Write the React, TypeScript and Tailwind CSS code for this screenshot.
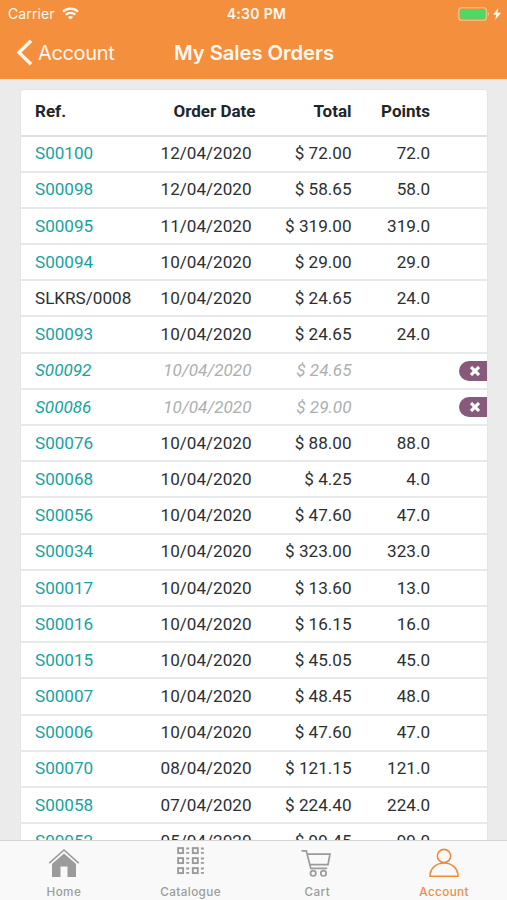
import React from 'react';

interface Order {
  ref: string;
  date: string;
  total: string;
  points?: string;
  plain?: boolean;
  cancelled?: boolean;
}

const orders: Order[] = [
  { ref: 'S00100', date: '12/04/2020', total: '72.00', points: '72.0' },
  { ref: 'S00098', date: '12/04/2020', total: '58.65', points: '58.0' },
  { ref: 'S00095', date: '11/04/2020', total: '319.00', points: '319.0' },
  { ref: 'S00094', date: '10/04/2020', total: '29.00', points: '29.0' },
  { ref: 'SLKRS/0008', date: '10/04/2020', total: '24.65', points: '24.0', plain: true },
  { ref: 'S00093', date: '10/04/2020', total: '24.65', points: '24.0' },
  { ref: 'S00092', date: '10/04/2020', total: '24.65', cancelled: true },
  { ref: 'S00086', date: '10/04/2020', total: '29.00', cancelled: true },
  { ref: 'S00076', date: '10/04/2020', total: '88.00', points: '88.0' },
  { ref: 'S00068', date: '10/04/2020', total: '4.25', points: '4.0' },
  { ref: 'S00056', date: '10/04/2020', total: '47.60', points: '47.0' },
  { ref: 'S00034', date: '10/04/2020', total: '323.00', points: '323.0' },
  { ref: 'S00017', date: '10/04/2020', total: '13.60', points: '13.0' },
  { ref: 'S00016', date: '10/04/2020', total: '16.15', points: '16.0' },
  { ref: 'S00015', date: '10/04/2020', total: '45.05', points: '45.0' },
  { ref: 'S00007', date: '10/04/2020', total: '48.45', points: '48.0' },
  { ref: 'S00006', date: '10/04/2020', total: '47.60', points: '47.0' },
  { ref: 'S00070', date: '08/04/2020', total: '121.15', points: '121.0' },
  { ref: 'S00058', date: '07/04/2020', total: '224.40', points: '224.0' },
  { ref: 'S00052', date: '05/04/2020', total: '99.45', points: '99.0' },
];

const StatusBar = () => (
  <div className="grid h-[27px] grid-cols-3 items-center pl-2 pr-1.5 text-[14px]">
    <div className="flex items-center gap-[7px]">
      <span className="tracking-[0.1px]">Carrier</span>
      <svg width="17" height="13" viewBox="0 0 17 13" fill="none" stroke="currentColor" strokeWidth="2.3">
        <path d="M1 4.6C5.2.6 11.8.6 16 4.6" />
        <path d="M3.7 7.7c2.7-2.5 6.9-2.5 9.6 0" />
        <path d="M5.9 9.9 8.5 12.6l2.6-2.7c-1.5-1.3-3.7-1.3-5.2 0Z" fill="currentColor" stroke="none" />
      </svg>
    </div>
    <span className="pl-1 text-center text-[14px] font-semibold tracking-[0.3px]">4:30 PM</span>
    <div className="flex items-center justify-end gap-[3px]">
      <svg width="32" height="14" viewBox="0 0 32 14">
        <rect x="0.8" y="0.8" width="27.6" height="12.4" rx="2.8" fill="none" stroke="#fac398" strokeWidth="1.1" />
        <rect x="2.2" y="2.2" width="24.8" height="9.6" rx="1.2" fill="#4cd964" />
        <path d="M29.8 5v4c1.5-.4 1.5-3.6 0-4Z" fill="#fac398" />
      </svg>
      <svg width="8" height="12" viewBox="0 0 8 12" fill="currentColor">
        <path d="M5.2 0 0 6.8h3.3L2.2 12 8 4.8H4.5L5.2 0Z" />
      </svg>
    </div>
  </div>
);

const NavBar = () => (
  <div className="grid h-[51px] grid-cols-[127px_254px_1fr] items-center">
    <button className="flex items-center gap-[5px] pl-4 text-[20px] leading-7 tracking-[-0.35px]">
      <svg width="17" height="27" viewBox="0 0 17 27" fill="none" stroke="currentColor" strokeWidth="3.4">
        <path d="M15 1.8 3 13.5 15 25.2" />
      </svg>
      Account
    </button>
    <h1 className="text-center text-[20.3px] font-semibold leading-7 tracking-[-0.1px]">My Sales Orders</h1>
  </div>
);

const OrderRow = ({ order }: { order: Order }) => (
  <div
    className={`grid h-[36.2px] grid-cols-[112px_104.5px_100px_78.5px_1fr] items-center border-b-2 border-[#e7e9eb] pl-[14px] pt-px text-right text-[17.1px] ${
      order.cancelled ? 'italic text-[#adafb1]' : 'text-[#2b2f33]'
    }`}
  >
    <span className={`text-left ${order.plain ? '' : 'text-[#17a2a0]'}`}>{order.ref}</span>
    <span>{order.date}</span>
    <span>$ {order.total}</span>
    <span>{order.points}</span>
    {order.cancelled && (
      <span className="ml-auto flex h-5 w-7 items-center justify-center rounded-l-full rounded-r-[4px] bg-[#875a7b] pl-1">
        <svg width="10" height="10" viewBox="0 0 10 10" stroke="#fff" strokeWidth="3.1">
          <path d="m1 1 8 8M9 1 1 9" />
        </svg>
      </span>
    )}
  </div>
);

const HomeIcon = () => (
  <svg width="32" height="30" viewBox="0 0 32 30" fill="currentColor">
    <path d="M16 5.5 4 16v13h8.5V18.5h7V29H28V16L16 5.5Z" />
    <path d="M1.3 15.2 16 2l14.7 13.2" fill="none" stroke="currentColor" strokeWidth="1.6" />
  </svg>
);

const CatalogueIcon = () => (
  <svg width="28" height="28" viewBox="0 0 28 28">
    {[0, 10, 20].map((y) =>
      [0, 14.7].map((x) => (
        <g key={`${x}-${y}`}>
          <rect x={x + 1.1} y={y + 1.1} width="5" height="5" fill="none" stroke="currentColor" strokeWidth="1.9" />
          <path d={`M${x + 9.2} ${y + 1.5}h3M${x + 9.2} ${y + 5.8}h3`} stroke="currentColor" strokeWidth="1.8" />
        </g>
      ))
    )}
  </svg>
);

const CartIcon = () => (
  <svg width="32" height="30" viewBox="0 0 32 30" fill="none" stroke="currentColor" strokeWidth="1.7">
    <path d="M.5 2.9h4.8L9.8 20.4h16.4" />
    <path d="M6.3 6.1H29l-2 10.6H8.8" />
    <circle cx="12.2" cy="25.3" r="2.7" />
    <circle cx="22.5" cy="25.3" r="2.7" />
  </svg>
);

const AccountIcon = () => (
  <svg width="32" height="30" viewBox="0 0 32 30" fill="none" stroke="currentColor" strokeWidth="1.6">
    <circle cx="16" cy="8" r="6.6" />
    <path d="M2 28.2C2 20.2 8.3 15 16 15s14 5.2 14 13.2H2Z" />
  </svg>
);

const tabs = [
  { label: 'Home', icon: <HomeIcon />, iconClass: 'h-[44px] pl-px' },
  { label: 'Catalogue', icon: <CatalogueIcon />, iconClass: 'h-[40px] pl-px' },
  { label: 'Cart', icon: <CartIcon />, iconClass: 'h-[43px]' },
  { label: 'Account', icon: <AccountIcon />, iconClass: 'h-[43px]', active: true },
];

const App = () => {
  return (
    <div className="flex h-[900px] w-[507px] flex-col overflow-hidden bg-[#ebebeb] font-['Inter',sans-serif]">
      <header className="h-[79px] shrink-0 bg-[#f48f3e] text-[#fff8f0]">
        <StatusBar />
        <NavBar />
      </header>

      <main className="min-h-0 flex-1 overflow-hidden px-5 pt-[9.5px]">
        <div className="mr-[-1px] w-[468px] overflow-hidden rounded-t-[4px] border-x border-t border-[#e5e5e6] bg-white font-['Roboto',sans-serif]">
          <div className="grid h-[47px] grid-cols-[112px_108.5px_96px_78.5px_1fr] items-center border-b-2 border-[#dfe1e3] pb-px pl-[14px] text-right text-[17px] font-bold text-[#212529]">
            <span className="text-left">Ref.</span>
            <span>Order Date</span>
            <span>Total</span>
            <span>Points</span>
          </div>
          {orders.map((order) => (
            <OrderRow key={order.ref} order={order} />
          ))}
        </div>
      </main>

      <nav className="grid h-[60px] shrink-0 grid-cols-4 border-t border-[#d5d5d5] bg-[#f9f9f9]">
        {tabs.map((tab) => (
          <button
            key={tab.label}
            className={`flex flex-col items-center justify-between pb-px ${
              tab.active ? 'text-[#f08b3c]' : 'text-[#9b9b9b]'
            }`}
          >
            <span className={`flex items-center ${tab.iconClass}`}>{tab.icon}</span>
            <span className="pl-px text-[11.7px] font-medium leading-[14px] tracking-[0.4px]">{tab.label}</span>
          </button>
        ))}
      </nav>
    </div>
  );
};

export default App;
